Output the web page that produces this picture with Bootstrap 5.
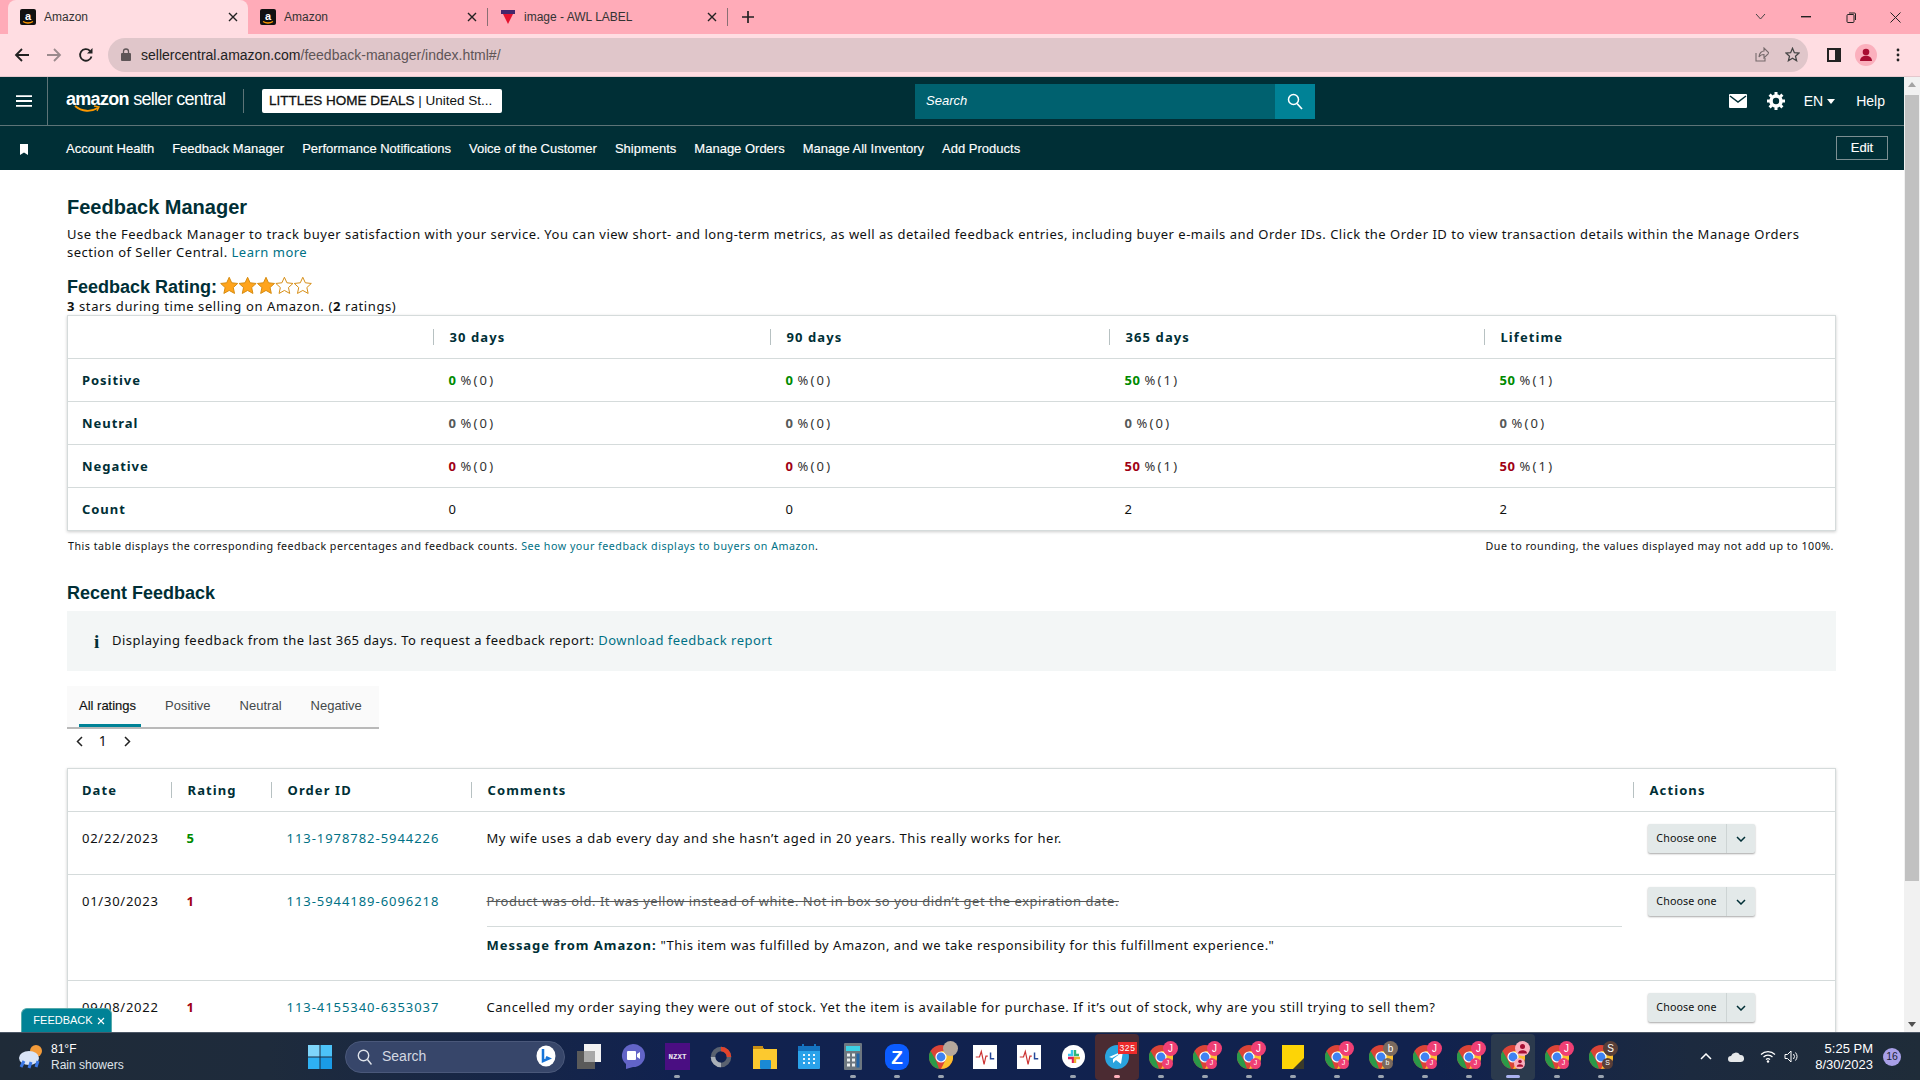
<!DOCTYPE html>
<html lang="en"><head><meta charset="utf-8"><title>Feedback Manager</title>
<link href="https://cdn.jsdelivr.net/npm/bootstrap@5.3.0/dist/css/bootstrap.min.css" rel="stylesheet">
<style>
html,body{height:100%;margin:0;overflow:hidden}
body{font-family:"Noto Sans","Liberation Sans",sans-serif;font-size:13px;letter-spacing:.55px;color:#0f1111;background:#fff}
.shell{height:1080px;width:1920px;position:relative}
.tabstrip{height:34px;background:#ffabb8;padding-left:8px;font-family:"Liberation Sans",sans-serif;font-size:12px;letter-spacing:0;color:#333}
.ctab{width:239px;height:34px;padding:0 10px 0 12px;gap:8px;position:relative}
.ctab.on{background:#ffdde2;border-radius:8px 8px 0 0;width:240px}
.ctab .ttl{flex:1;white-space:nowrap;overflow:hidden}
.sepr{width:1px;height:18px;background:#8a6f74}
.tabsp{flex:1}
.wctl{padding-right:2px}
.wctl span{width:45px;display:flex;justify-content:center}
.toolbar{height:43px;background:#ffdde2;padding:0 6px 1px 6px;border-bottom:1px solid #e4c8cd;letter-spacing:0}
.tbtn{width:32px;display:flex;justify-content:center;flex:none}
.omni{height:34px;flex:1;background:#e0c6ca;border-radius:17px;margin:0 6px 0 6px;padding:0 8px 0 13px;font-family:"Liberation Sans",sans-serif;font-size:14px;color:#5e5557}
.omni b{font-weight:400;color:#222}
.urltxt{margin-left:2px;padding-top:1px}
.pagearea{height:955px}
.pagecol{width:1904px;flex:none}
.topbar{height:49px;background:#002f36;border-bottom:1px solid #5d7477;color:#fff;font-family:"Liberation Sans",sans-serif;letter-spacing:0}
.burger{width:48px;height:48px;border-right:1px solid #5d7477;flex:none}
.slogo{margin-left:18px;width:159px;line-height:1;position:relative;font-size:18px;letter-spacing:-.7px;white-space:nowrap;height:34px;padding-top:6px;flex:none}
.slogo b{font-weight:700}
.slogo svg{position:absolute;left:0;top:21px}
.vline{width:1px;height:24px;background:#5d7477;margin:0 18px;flex:none}
.store{width:240px;height:24px;background:#fff;color:#0f1111;font-size:13.5px;border-radius:2px;padding:0 7px;white-space:nowrap;overflow:hidden;flex:none}
.store b{font-weight:400;-webkit-text-stroke:.3px #0f1111}
.sbox{margin-left:413px;width:400px;height:35px;background:#00616f;flex:none;font-style:italic;font-size:13px;padding-left:11px}
.sbox .sgo{width:40px;height:35px;background:#008296;margin-left:auto;font-style:normal}
.rtools{margin-left:auto;margin-right:19px;font-size:14px}
.mailic{margin-right:20px}
.enlbl{margin-left:19px}
.helplbl{margin-left:21px}
.subnav{height:44px;background:#002f36;color:#fff;font-family:"Liberation Sans",sans-serif;font-size:13px;letter-spacing:0;-webkit-text-stroke:.15px #fff;padding:2px 16px 0 20px}
.subnav a{color:#fff;text-decoration:none;margin-right:18px;white-space:nowrap}
.edit{margin-left:auto;width:52px;height:24px;border:1px solid #7c8f92;font-size:13px;line-height:22px;text-align:center;color:#fff;position:relative;top:-1px}
.pagewrap{height:862px;overflow:hidden;padding:26px 68px 0 67px}
.ptitle{font:700 20px/22px "Liberation Sans",sans-serif;letter-spacing:0;color:#002f36;margin:0}
.pintro{line-height:18px;margin:7px 0 0;color:#0f1111;letter-spacing:.5px}
a.tl{color:#007185;text-decoration:none}
.rating-h{height:22px;font:700 18px/22px "Liberation Sans",sans-serif;letter-spacing:0;color:#002f36;margin:15px 0 0;gap:3px}
.rating-h svg{margin-bottom:4px}
.rating-s{line-height:18px;margin:-1px 0 0;letter-spacing:.6px}
.fbtbl{table-layout:fixed;width:1769px;margin:0;border:1px solid #d5dbdb;box-shadow:0 1px 3px rgba(0,0,0,.2);border-collapse:collapse;background:#fff}
.fbtbl th,.fbtbl td{border:0;border-bottom:1px solid #d5dbdb;padding:0 0 0 16px;line-height:18px;color:#0f1111;background:transparent;box-shadow:none;vertical-align:top}
.fbtbl th:first-child,.fbtbl td:first-child{padding-left:14px}
.fbtbl thead th{height:43px;padding:0;vertical-align:middle;color:#002f36;font-weight:700;letter-spacing:1.1px}
.fbtbl thead th>div{border-left:1px solid #b7c1c2;line-height:16px;padding-left:16px}
.fbtbl thead th:first-child{padding:0}
.fbtbl thead th:first-child>div{border-left:0;padding-left:14px}
.t1 tbody th,.t1 tbody td{height:43px;vertical-align:middle}
.t1 tbody th{font-weight:700;color:#002f36;letter-spacing:.95px}
.fbtbl .c-g,.c-g{color:#008a00;font-weight:700}.fbtbl .c-r,.c-r{color:#a00014;font-weight:700}.c-n{color:#565959;font-weight:700}
.c-p{color:#333;letter-spacing:2.2px}
.fnote{font-size:10.7px;line-height:16px;margin-top:7px;padding:0 2px 0 1px;letter-spacing:.5px;color:#0f1111}
.recent{font:700 18px/20px "Liberation Sans",sans-serif;letter-spacing:0;color:#002f36;margin:29px 0 0}
.infobox{margin-top:8px;height:60px;background:#f3f6f6;padding-left:27px;gap:10px;letter-spacing:.48px}
.ico-i{font:700 19px/1 "Liberation Serif",serif;color:#002f36;width:8px}
.rtabs{margin-top:15px;width:312px;height:43px;background:#fafafa;border-bottom:2px solid #b9b9b9;font-family:"Liberation Sans",sans-serif;font-size:13px;letter-spacing:0;color:#44494a;padding-left:12px;gap:29px}
.rtabs span{height:41px;line-height:40px;position:relative}
.rtabs .act{color:#0f1111;border-bottom:3px solid #008296;margin-right:-5px;padding-right:5px;-webkit-text-stroke:.15px #0f1111}
.pager{margin-top:1px;height:20px;gap:0}
.pager span{width:24px;text-align:center;font-size:14px}
.t2wrap{margin-top:18px}
.t2 tbody td{padding-top:17px}
.t2 tbody td.act-c{padding-top:12px;padding-left:15px}
.dt{letter-spacing:.75px}
a.oid{letter-spacing:.95px}
.r1 td{height:63px}.r2 td{height:106px}.r3 td{height:70px}
.strike{text-decoration:line-through;color:#565959;letter-spacing:.53px}
.msgline{border-top:1px solid #d5dbdb;margin-top:16px;padding-top:9px;margin-right:11px;letter-spacing:.5px}
.msgline b{color:#002f36;letter-spacing:.95px}
.choose{display:inline-flex;height:29px;width:107px;background:#e3e9e9;border-radius:2px;box-shadow:0 1px 2px rgba(0,0,0,.35);font-size:10.7px;letter-spacing:.1px;line-height:28px;color:#0f1111}
.choose .cl{width:79px;text-align:center;border-right:1px solid #cdd4d4}
.choose .cr{flex:1;display:flex;align-items:center;justify-content:center}
.vscroll{width:16px;height:955px;background:#f1f1f1;padding:0 1px}
.vscroll .thumb{height:786px;background:#c1c1c1;margin-top:3px}
.vscroll .arr{height:15px}
.fbk{position:absolute;left:21px;top:1008px;width:91px;height:24px;background:#008296;color:#fff;border-radius:6px 6px 0 0;font-family:"Liberation Sans",sans-serif;font-size:11px;letter-spacing:0;gap:4px;padding-left:5px;border:1px solid #5aa;border-bottom:0}
.taskbar{height:48px;background:linear-gradient(90deg,#1f2b38 0,#1e2b3c 14%,#11224f 35%,#11224e 75%,#1c2a3f 88%,#1f2c39 100%);border-top:1px solid #4c5766;color:#fff;font-family:"Liberation Sans",sans-serif;letter-spacing:0}
.wthr{width:298px;padding-left:18px;gap:7px;font-size:12px;line-height:16px;flex:none}
.wthr small{font-size:12px;color:#dfe3ea;display:block}
.tico{width:44px;height:46px;flex:none;position:relative;display:flex;align-items:center;justify-content:center}
.tico.run::after{content:"";position:absolute;left:19px;bottom:2px;width:6px;height:3px;border-radius:2px;background:#9aa3af}
.tico.cur{background:#2b3a4d;border-radius:4px}
.tico.cur::after{left:15px;width:14px;background:#aab2f0}
.tico.tg{background:#4b2b32;border-radius:4px}
.tico.tg::after{background:#ffb0bb}
.tsearch{width:220px;height:32px;margin:0 2px 0 3px;background:#37466a;border:1px solid #4a587a;border-radius:16px;flex:none;padding:0 8px 0 11px;font-size:14px;color:#d3d8e2;gap:10px;position:relative}
.bdg{position:absolute;border-radius:50%;color:#fff;display:flex;align-items:center;justify-content:center;background:#ef3f74}
.bdg.a{width:15px;height:15px;top:7px;right:5px;font-size:10px}
.bdg.b{width:11px;height:11px;top:24px;right:10px;font-size:7px}
.bdg.s{background:#5a3f38}
.bdg.bb{background:#7b6a5e}.bdg.bp{background:#fbb0bd}.bdg.bph{background:#b5a79c}
.bdgnum{position:absolute;top:8px;right:2px;background:#ed2b2b;color:#fff;font-size:8.5px;line-height:12px;padding:0 1.5px;letter-spacing:.6px}
.tray{margin-left:auto;font-size:13px;padding-right:19px}
.clock{text-align:right;line-height:16px;font-size:13px;margin-left:15px;white-space:nowrap}
.notif{width:18px;height:18px;border-radius:50%;background:#a9a0e8;color:#1b2436;font-size:10.5px;margin-left:10px;display:flex;align-items:center;justify-content:center}
.navmark{margin-right:38px;flex:none}
.w366{width:365px}.w337{width:337px}.w339{width:339px}.w375{width:375px}
.w103{width:103px}.w100{width:100px}.w200{width:200px}.w1162{width:1162px}
.defs-holder{position:absolute;width:0;height:0}
</style></head><body>
<svg class="defs-holder"><defs>
<symbol id="chr" viewBox="0 0 24 24"><circle cx="12" cy="12" r="12" fill="#db4437"/><path d="M12 24A12 12 0 0 1 1.600 6L7 15.500l3 8.300z" fill="#2b9a48"/><path d="M12 24a12 12 0 0 0 10.400-18H12l5 8z" fill="#fbc02d"/><circle cx="12" cy="12" r="5.600" fill="#fff"/><circle cx="12" cy="12" r="4.400" fill="#3f82f1"/></symbol>
<symbol id="amz" viewBox="0 0 16 16"><rect width="16" height="16" rx="2" fill="#111"/><path d="M3 12.500c3 1.800 7 1.800 10 0" fill="none" stroke="#f90" stroke-width="1.300"/><text x="8" y="10.500" font-size="11" font-weight="700" font-family="Liberation Sans" fill="#fff" text-anchor="middle">a</text></symbol>
<symbol id="wave" viewBox="0 0 26 26"><rect width="26" height="26" fill="#fff"/><path d="M3 13h4l2-6 3 14 2-9h2" fill="none" stroke="#c33" stroke-width="1.300"/><path d="M19 8v7h4" fill="none" stroke="#26489a" stroke-width="1.600"/></symbol>
</defs></svg>
<div class="shell d-flex flex-column">

<div class="tabstrip d-flex align-items-center">
 <div class="ctab on d-flex align-items-center"><svg width="16" height="16"><use href="#amz"/></svg><span class="ttl">Amazon</span><svg width="10" height="10" viewBox="0 0 10 10"><path d="M1 1l8 8M9 1l-8 8" stroke="#222" stroke-width="1.400"/></svg></div>
 <div class="ctab d-flex align-items-center"><svg width="16" height="16"><use href="#amz"/></svg><span class="ttl">Amazon</span><svg width="10" height="10" viewBox="0 0 10 10"><path d="M1 1l8 8M9 1l-8 8" stroke="#222" stroke-width="1.400"/></svg></div>
 <div class="sepr"></div>
 <div class="ctab d-flex align-items-center"><svg width="16" height="16" viewBox="0 0 16 16"><rect x="1" y="1" width="14" height="4" fill="#43266b"/><path d="M3 5h10l-5 10z" fill="#e4122e"/></svg><span class="ttl">image - AWL LABEL</span><svg width="10" height="10" viewBox="0 0 10 10"><path d="M1 1l8 8M9 1l-8 8" stroke="#222" stroke-width="1.400"/></svg></div>
 <div class="sepr"></div>
 <div class="tbtn ms-1"><svg width="14" height="14" viewBox="0 0 14 14"><path d="M7 1v12M1 7h12" stroke="#222" stroke-width="1.700"/></svg></div>
 <div class="tabsp"></div>
 <div class="wctl d-flex align-items-center">
  <span><svg width="11" height="8" viewBox="0 0 11 8"><path d="M1 1l4.500 5L10 1" fill="none" stroke="#444" stroke-width="1"/></svg></span>
  <span><svg width="10" height="2"><rect width="10" height="1.400" fill="#222"/></svg></span>
  <span><svg width="10" height="11" viewBox="0 0 10 11"><rect x="1" y="2.500" width="7" height="8" rx="1" fill="none" stroke="#222"/><path d="M3 1h5.500a1 1 0 0 1 1 1v6" fill="none" stroke="#222"/></svg></span>
  <span><svg width="11" height="11" viewBox="0 0 11 11"><path d="M.5.5l10 10M10.500.5l-10 10" stroke="#222"/></svg></span>
 </div>
</div>

<div class="toolbar d-flex align-items-center">
 <div class="tbtn"><svg width="16" height="16" viewBox="0 0 16 16"><path d="M15 8H2M8 2L2 8l6 6" fill="none" stroke="#222" stroke-width="1.800"/></svg></div>
 <div class="tbtn"><svg width="16" height="16" viewBox="0 0 16 16"><path d="M1 8h13M8 2l6 6-6 6" fill="none" stroke="#9b8a8d" stroke-width="1.800"/></svg></div>
 <div class="tbtn"><svg width="16" height="16" viewBox="0 0 16 16"><path d="M13.500 9.500A5.800 5.800 0 1 1 12 3.800" fill="none" stroke="#222" stroke-width="1.800"/><path d="M14.500 1v5.500H9z" fill="#222"/></svg></div>
 <div class="omni d-flex align-items-center"><svg class="me-2" width="10" height="13" viewBox="0 0 10 13"><rect y="5" width="10" height="8" rx="1" fill="#5e5557"/><path d="M2.500 5.500V3.500a2.500 2.500 0 0 1 5 0v2" fill="none" stroke="#5e5557" stroke-width="1.300"/></svg>
  <span class="urltxt"><b>sellercentral.amazon.com</b>/feedback-manager/index.html#/</span>
  <span class="ms-auto d-flex align-items-center gap-3"><svg width="16" height="16" viewBox="0 0 16 16"><path d="M3 6v8h9v-3M6 10c0-4 3-6 5-6V1l5 5-5 5V7.500C9 7.500 7 8 6 10z" fill="none" stroke="#766a6c" stroke-width="1.100"/></svg><svg width="15" height="15" viewBox="0 0 24 24"><path d="M12 2l3 7 7.500.7-5.700 5 1.800 7.300L12 18l-6.600 4 1.800-7.300-5.700-5L9 9z" fill="none" stroke="#444" stroke-width="2"/></svg></span></div>
 <div class="tbtn ms-1"><svg width="14" height="14" viewBox="0 0 14 14"><rect x="1" y="1" width="12" height="12" fill="none" stroke="#222" stroke-width="2"/><rect x="8" y="1" width="5" height="12" fill="#222"/></svg></div>
 <div class="tbtn"><svg width="22" height="22" viewBox="0 0 22 22"><circle cx="11" cy="11" r="11" fill="#fbb0bd"/><circle cx="11" cy="8" r="3.300" fill="#a80e32"/><path d="M5 17c0-7 12-7 12 0z" fill="#a80e32"/></svg></div>
 <div class="tbtn"><svg width="4" height="14" viewBox="0 0 4 14"><circle cx="2" cy="2" r="1.400" fill="#222"/><circle cx="2" cy="7" r="1.400" fill="#222"/><circle cx="2" cy="12" r="1.400" fill="#222"/></svg></div>
</div>

<div class="pagearea d-flex">
<div class="pagecol d-flex flex-column">
<div class="topbar d-flex align-items-center">
 <div class="burger d-flex align-items-center justify-content-center"><svg width="16" height="12" viewBox="0 0 16 12"><path d="M0 1.200h16M0 6h16M0 10.800h16" stroke="#fff" stroke-width="1.800"/></svg></div>
 <div class="slogo"><b>amazon</b> seller central<svg width="44" height="10" viewBox="0 0 44 10"><path d="M9 1c7 6 16 6 23 2" fill="none" stroke="#f90" stroke-width="1.800"/><path d="M28 1l5 1-2 4" fill="none" stroke="#f90" stroke-width="1.300"/></svg></div>
 <div class="vline"></div>
 <div class="store d-flex align-items-center"><b>LITTLES HOME DEALS</b>&nbsp;|&nbsp;United St...</div>
 <div class="sbox d-flex align-items-center">Search<div class="sgo d-flex align-items-center justify-content-center"><svg width="16" height="17" viewBox="0 0 16 17"><circle cx="6.500" cy="6.500" r="5" fill="none" stroke="#fff" stroke-width="1.500"/><path d="M10 10.500l5 5.500" stroke="#fff" stroke-width="1.700"/></svg></div></div>
 <div class="rtools d-flex align-items-center">
  <svg class="mailic" width="18" height="14" viewBox="0 0 18 14"><rect width="18" height="14" rx="1" fill="#fff"/><path d="M1 2l8 6 8-6" fill="none" stroke="#002f36" stroke-width="1.500"/></svg>
  <svg width="18" height="18" viewBox="0 0 18 18"><circle cx="9" cy="9" r="5" fill="none" stroke="#fff" stroke-width="3.600"/><path d="M9 0v3M9 15v3M0 9h3M15 9h3M2.600 2.600l2.100 2.100M13.300 13.300l2.100 2.100M2.600 15.400l2.100-2.100M13.300 4.700l2.100-2.100" stroke="#fff" stroke-width="3"/></svg>
  <span class="enlbl">EN</span><svg class="ms-1" width="8" height="5" viewBox="0 0 8 5"><path d="M0 0h8L4 5z" fill="#fff"/></svg>
  <span class="helplbl">Help</span>
 </div>
</div>
<div class="subnav d-flex align-items-center">
 <svg width="8" height="11" viewBox="0 0 8 11" class="navmark"><path d="M0 0h8v11L4 8.500 0 11z" fill="#fff"/></svg>
 <a href="#">Account Health</a><a href="#">Feedback Manager</a><a href="#">Performance Notifications</a><a href="#">Voice of the Customer</a><a href="#">Shipments</a><a href="#">Manage Orders</a><a href="#">Manage All Inventory</a><a href="#">Add Products</a>
 <div class="edit">Edit</div>
</div>

 <main class="pagewrap">
  <h1 class="ptitle">Feedback Manager</h1>
  <p class="pintro">Use the Feedback Manager to track buyer satisfaction with your service. You can view short- and long-term metrics, as well as detailed feedback entries, including buyer e-mails and Order IDs. Click the Order ID to view transaction details within the Manage Orders section of Seller Central. <a class="tl" href="#">Learn more</a></p>
  <div class="rating-h d-flex align-items-center">Feedback Rating:
   <svg width="92" height="19" viewBox="0 0 95 19"><g stroke="#d48a0e" stroke-width="1"><path d="M9.500 1l2.600 5.700 6.200.7-4.600 4.200 1.300 6.100-5.500-3.100-5.500 3.100 1.300-6.100L.7 7.400l6.200-.7z" fill="#ffa41c"/><path d="M28.500 1l2.600 5.700 6.200.7-4.600 4.200 1.300 6.100-5.500-3.100-5.500 3.100 1.300-6.100-4.600-4.200 6.200-.7z" fill="#ffa41c"/><path d="M47.500 1l2.600 5.700 6.200.7-4.600 4.200 1.300 6.100-5.500-3.100-5.500 3.100 1.300-6.100-4.600-4.200 6.200-.7z" fill="#ffa41c"/><path d="M66.500 1l2.600 5.700 6.200.7-4.600 4.200 1.300 6.100-5.500-3.100-5.500 3.100 1.300-6.100-4.600-4.200 6.200-.7z" fill="#fff"/><path d="M85.500 1l2.600 5.700 6.200.7-4.600 4.200 1.300 6.100-5.500-3.100-5.500 3.100 1.300-6.100-4.600-4.200 6.200-.7z" fill="#fff"/></g></svg>
  </div>
  <div class="rating-s"><b>3</b> stars during time selling on Amazon. (<b>2</b> ratings)</div>
  <table class="table fbtbl t1">
   <colgroup><col class="w366"><col class="w337"><col class="w339"><col class="w375"><col></colgroup>
   <thead><tr><th><div>&nbsp;</div></th><th><div>30 days</div></th><th><div>90 days</div></th><th><div>365 days</div></th><th><div>Lifetime</div></th></tr></thead>
   <tbody>
   <tr><th>Positive</th><td><span class="c-g">0</span> <span class="c-p">%(0)</span></td><td><span class="c-g">0</span> <span class="c-p">%(0)</span></td><td><span class="c-g">50</span> <span class="c-p">%(1)</span></td><td><span class="c-g">50</span> <span class="c-p">%(1)</span></td></tr>
   <tr><th>Neutral</th><td><span class="c-n">0</span> <span class="c-p">%(0)</span></td><td><span class="c-n">0</span> <span class="c-p">%(0)</span></td><td><span class="c-n">0</span> <span class="c-p">%(0)</span></td><td><span class="c-n">0</span> <span class="c-p">%(0)</span></td></tr>
   <tr><th>Negative</th><td><span class="c-r">0</span> <span class="c-p">%(0)</span></td><td><span class="c-r">0</span> <span class="c-p">%(0)</span></td><td><span class="c-r">50</span> <span class="c-p">%(1)</span></td><td><span class="c-r">50</span> <span class="c-p">%(1)</span></td></tr>
   <tr><th>Count</th><td>0</td><td>0</td><td>2</td><td>2</td></tr>
   </tbody>
  </table>
  <div class="fnote d-flex justify-content-between"><span>This table displays the corresponding feedback percentages and feedback counts. <a class="tl" href="#">See how your feedback displays to buyers on Amazon</a>.</span><span>Due to rounding, the values displayed may not add up to 100%.</span></div>
  <h2 class="recent">Recent Feedback</h2>
  <div class="infobox d-flex align-items-center"><span class="ico-i">i</span><span>Displaying feedback from the last 365 days. To request a feedback report: <a class="tl" href="#">Download feedback report</a></span></div>
  <div class="rtabs d-flex"><span class="act">All ratings</span><span>Positive</span><span>Neutral</span><span>Negative</span></div>
  <div class="pager d-flex align-items-center"><span><svg width="7" height="11" viewBox="0 0 7 11"><path d="M6 1L1.500 5.500 6 10" fill="none" stroke="#222" stroke-width="1.500"/></svg></span><span>1</span><span><svg width="7" height="11" viewBox="0 0 7 11"><path d="M1 1l4.500 4.500L1 10" fill="none" stroke="#222" stroke-width="1.500"/></svg></span></div>
  <div class="t2wrap">
  <table class="table fbtbl t2">
   <colgroup><col class="w103"><col class="w100"><col class="w200"><col class="w1162"><col></colgroup>
   <thead><tr><th><div>Date</div></th><th><div>Rating</div></th><th><div>Order ID</div></th><th><div>Comments</div></th><th><div>Actions</div></th></tr></thead>
   <tbody>
   <tr class="r1"><td class="dt">02/22/2023</td><td class="c-g">5</td><td><a class="tl oid" href="#">113-1978782-5944226</a></td><td>My wife uses a dab every day and she hasn’t aged in 20 years. This really works for her.</td><td class="act-c"><span class="choose"><span class="cl">Choose one</span><span class="cr"><svg width="10" height="6" viewBox="0 0 10 6"><path d="M1 1l4 4 4-4" fill="none" stroke="#002f36" stroke-width="1.500"/></svg></span></span></td></tr>
   <tr class="r2"><td class="dt">01/30/2023</td><td class="c-r">1</td><td><a class="tl oid" href="#">113-5944189-6096218</a></td><td><span class="strike">Product was old. It was yellow instead of white. Not in box so you didn’t get the expiration date.</span><div class="msgline"><b>Message from Amazon:</b> "This item was fulfilled by Amazon, and we take responsibility for this fulfillment experience."</div></td><td class="act-c"><span class="choose"><span class="cl">Choose one</span><span class="cr"><svg width="10" height="6" viewBox="0 0 10 6"><path d="M1 1l4 4 4-4" fill="none" stroke="#002f36" stroke-width="1.500"/></svg></span></span></td></tr>
   <tr class="r3"><td class="dt">09/08/2022</td><td class="c-r">1</td><td><a class="tl oid" href="#">113-4155340-6353037</a></td><td>Cancelled my order saying they were out of stock. Yet the item is available for purchase. If it’s out of stock, why are you still trying to sell them?</td><td class="act-c"><span class="choose"><span class="cl">Choose one</span><span class="cr"><svg width="10" height="6" viewBox="0 0 10 6"><path d="M1 1l4 4 4-4" fill="none" stroke="#002f36" stroke-width="1.500"/></svg></span></span></td></tr>
   </tbody>
  </table>
  </div>
 </main>
</div>
 <div class="vscroll d-flex flex-column align-items-stretch">
  <div class="arr d-flex align-items-center justify-content-center"><svg width="8" height="5" viewBox="0 0 8 5"><path d="M4 0l4 5H0z" fill="#a3a3a3"/></svg></div>
  <div class="thumb"></div>
  <div class="arr mt-auto d-flex align-items-center justify-content-center"><svg width="8" height="5" viewBox="0 0 8 5"><path d="M0 0h8L4 5z" fill="#505050"/></svg></div>
 </div>
</div>

<div class="taskbar d-flex align-items-center">
 <div class="wthr d-flex align-items-center"><svg width="26" height="26" viewBox="0 0 26 26"><circle cx="18" cy="7" r="6" fill="#f39b3a"/><ellipse cx="11" cy="14" rx="10" ry="7" fill="#d9e4f7"/><path d="M6 17l-3 6M13 18l-2 6M20 17l-2 6" stroke="#3b78e7" stroke-width="3"/></svg><div>81°F<small>Rain showers</small></div></div>
 <div class="tico"><svg width="24" height="24" viewBox="0 0 24 24"><rect width="11.500" height="11.500" fill="#7fd6fb"/><rect x="12.500" width="11.500" height="11.500" fill="#4cc2f8"/><rect y="12.500" width="11.500" height="11.500" fill="#2eb1f3"/><rect x="12.500" y="12.500" width="11.500" height="11.500" fill="#1a9be6"/></svg></div>
 <div class="tsearch d-flex align-items-center"><svg width="15" height="16" viewBox="0 0 15 16"><circle cx="6.500" cy="6.500" r="5.200" fill="none" stroke="#dfe3ea" stroke-width="1.400"/><path d="M10.500 10.500l4 5" stroke="#dfe3ea" stroke-width="1.500"/></svg><span>Search</span><svg class="ms-auto" width="20" height="24" viewBox="0 0 20 24"><ellipse cx="10" cy="11" rx="9.500" ry="10.500" fill="#fff"/><path d="M7 4v12l6-2.500-3-1.500" fill="none" stroke="#1774d8" stroke-width="2.500"/></svg></div>
 <div class="tico"><svg width="24" height="25" viewBox="0 0 24 25"><rect y="7" width="18" height="18" fill="#5a5a5a"/><rect x="7" width="17" height="18" fill="#f2f2f2"/><rect x="7" y="7" width="11" height="11" fill="#a9a9a9"/></svg></div>
 <div class="tico"><svg width="24" height="25" viewBox="0 0 24 25"><path d="M12 0a12 11.500 0 0 1 0 23l-7 2v-5A12 11.500 0 0 1 12 0z" fill="#6264c7"/><rect x="6" y="7" width="9" height="9" rx="1" fill="#fff"/><path d="M16 10l3-2v7l-3-2z" fill="#fff"/></svg></div>
 <div class="tico run"><svg width="25" height="27" viewBox="0 0 25 27"><rect width="25" height="27" fill="#4a0e82"/><text x="12.500" y="16" font-size="7.500" font-weight="700" font-family="Liberation Mono" fill="#e8e8ee" text-anchor="middle">NZXT</text></svg></div>
 <div class="tico"><svg width="24" height="24" viewBox="0 0 24 24"><circle cx="12" cy="12" r="8" fill="none" stroke="#5a6270" stroke-width="4.500"/><path d="M12 4a8 8 0 0 1 8 8" fill="none" stroke="#e2432b" stroke-width="4.500"/><path d="M4 12a8 8 0 0 0 8 8" fill="none" stroke="#aab0b8" stroke-width="4.500"/></svg></div>
 <div class="tico"><svg width="24" height="25" viewBox="0 0 24 25"><path d="M0 2h9l2 3h13v20H0z" fill="#fcc92f"/><rect y="2" width="10" height="3" fill="#c98e12"/><rect x="7" y="16" width="11" height="9" rx="1" fill="#1a8ad5"/></svg></div>
 <div class="tico"><svg width="22" height="25" viewBox="0 0 22 25"><rect y="2" width="22" height="23" rx="1" fill="#2aa2ea"/><rect y="2" width="22" height="5" fill="#1573c0"/><path d="M5 0v4M17 0v4" stroke="#1573c0" stroke-width="2"/><path d="M5 11h2M10 11h2M15 11h2M5 15h2M10 15h2M15 15h2M5 19h2M10 19h2M15 19h2" stroke="#e9f5fd" stroke-width="2"/></svg></div>
 <div class="tico run"><svg width="18" height="27" viewBox="0 0 18 27"><rect width="18" height="27" rx="1" fill="#6d7780"/><rect x="2" y="3" width="14" height="5" fill="#3dd0e4"/><path d="M3 12h3M8 12h3M3 17h3M8 17h3M3 22h3M8 22h3" stroke="#eceff1" stroke-width="3"/><rect x="12.500" y="10.500" width="3" height="14" fill="#2265a8"/></svg></div>
 <div class="tico run"><svg width="24" height="26" viewBox="0 0 24 26"><rect width="24" height="26" rx="9" fill="#0b5cff"/><text x="12" y="20" font-size="19" font-weight="700" font-family="Liberation Sans" fill="#fff" text-anchor="middle">Z</text></svg></div>
 <div class="tico run"><svg width="24" height="24"><use href="#chr"/></svg><span class="bdg a bph"></span></div>
 <div class="tico"><svg width="24" height="26"><use href="#wave"/></svg></div>
 <div class="tico"><svg width="24" height="26"><use href="#wave"/></svg></div>
 <div class="tico run"><svg width="23" height="23" viewBox="0 0 23 23"><circle cx="11.500" cy="11.500" r="11.500" fill="#fff"/><path d="M10 5v5H6" stroke="#36c5f0" stroke-width="2.400" fill="none"/><path d="M13 5v5h4" stroke="#2eb67d" stroke-width="2.400" fill="none"/><path d="M6 13h5v5" stroke="#e01e5a" stroke-width="2.400" fill="none"/><path d="M13 18v-5h5" stroke="#ecb22e" stroke-width="2.400" fill="none"/></svg></div>
 <div class="tico run tg"><svg width="24" height="24" viewBox="0 0 24 24"><circle cx="12" cy="12" r="12" fill="#2aa3dd"/><path d="M4 12l14-6-2 13-5-4-3 3v-4l8-6-9 5z" fill="#fff"/></svg><span class="bdgnum">325</span></div>
 <div class="tico run"><svg width="24" height="24"><use href="#chr"/></svg><span class="bdg a">J</span><span class="bdg b">J</span></div>
 <div class="tico run"><svg width="24" height="24"><use href="#chr"/></svg><span class="bdg a">J</span><span class="bdg b">J</span></div>
 <div class="tico run"><svg width="24" height="24"><use href="#chr"/></svg><span class="bdg a">J</span><span class="bdg b">J</span></div>
 <div class="tico run"><svg width="22" height="24" viewBox="0 0 22 24"><rect width="22" height="24" fill="#fdd406"/><path d="M11 24l11-11v11z" fill="#3a3a2a"/></svg></div>
 <div class="tico run"><svg width="24" height="24"><use href="#chr"/></svg><span class="bdg a">J</span><span class="bdg b">J</span></div>
 <div class="tico run"><svg width="24" height="24"><use href="#chr"/></svg><span class="bdg a bb">b</span><span class="bdg b bb">b</span></div>
 <div class="tico run"><svg width="24" height="24"><use href="#chr"/></svg><span class="bdg a">J</span><span class="bdg b">J</span></div>
 <div class="tico run"><svg width="24" height="24"><use href="#chr"/></svg><span class="bdg a">J</span><span class="bdg b">J</span></div>
 <div class="tico run cur"><svg width="24" height="24"><use href="#chr"/></svg><span class="bdg a bp"><svg width="11" height="11" viewBox="0 0 22 22"><circle cx="11" cy="7" r="5" fill="#a80e32"/><path d="M2 21c0-9 18-9 18 0z" fill="#a80e32"/></svg></span><span class="bdg b bp"><svg width="8" height="8" viewBox="0 0 22 22"><circle cx="11" cy="7" r="5" fill="#a80e32"/><path d="M2 21c0-9 18-9 18 0z" fill="#a80e32"/></svg></span></div>
 <div class="tico run"><svg width="24" height="24"><use href="#chr"/></svg><span class="bdg a">J</span><span class="bdg b">J</span></div>
 <div class="tico run"><svg width="24" height="24"><use href="#chr"/></svg><span class="bdg a s">S</span><span class="bdg b s">S</span></div>
 <div class="tray d-flex align-items-center">
  <svg class="me-3" width="12" height="7" viewBox="0 0 12 7"><path d="M1 6l5-5 5 5" fill="none" stroke="#fff" stroke-width="1.500"/></svg>
  <svg class="me-3" width="16" height="10" viewBox="0 0 16 10"><path d="M3 10a3 3 0 0 1 0-6 5 5 0 0 1 9-1 3.500 3.500 0 0 1 1 7z" fill="#e6e8ea"/></svg>
  <svg class="me-2" width="16" height="13" viewBox="0 0 16 13"><path d="M1 4.500a10 10 0 0 1 14 0M3.500 7a6.500 6.500 0 0 1 9 0M6 9.500a3 3 0 0 1 4 0" fill="none" stroke="#fff" stroke-width="1.200"/><circle cx="8" cy="11.500" r="1.200" fill="#fff"/></svg>
  <svg width="16" height="13" viewBox="0 0 16 13"><path d="M1 4.500h2.500L7 1v11L3.500 8.500H1z" fill="none" stroke="#fff"/><path d="M9.500 4a4 4 0 0 1 0 5M11.500 2.500a6.500 6.500 0 0 1 0 8" fill="none" stroke="#fff"/></svg>
  <div class="clock">5:25 PM<br>8/30/2023</div>
  <div class="notif">16</div>
 </div>
</div>

<div class="fbk d-flex align-items-center justify-content-center">FEEDBACK <svg width="8" height="8" viewBox="0 0 8 8"><path d="M1 1l6 6M7 1L1 7" stroke="#fff" stroke-width="1.100"/></svg></div>
</div>
<script src="https://cdn.jsdelivr.net/npm/bootstrap@5.3.0/dist/js/bootstrap.bundle.min.js"></script>
</body></html>
